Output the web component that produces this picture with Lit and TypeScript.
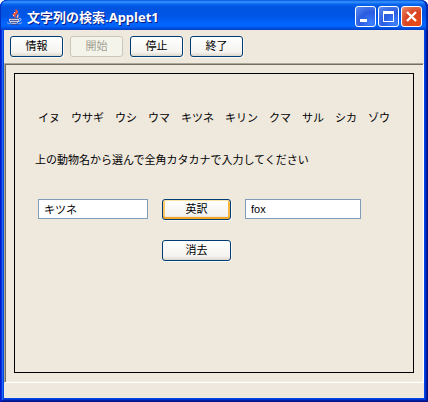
import { LitElement, html, css, svg } from "lit";
import { customElement, state } from "lit/decorators.js";

const ANIMALS: [string, string][] = [
  ["イヌ", "dog"],
  ["ウサギ", "rabbit"],
  ["ウシ", "cow"],
  ["ウマ", "horse"],
  ["キツネ", "fox"],
  ["キリン", "giraffe"],
  ["クマ", "bear"],
  ["サル", "monkey"],
  ["シカ", "deer"],
  ["ゾウ", "elephant"],
];

const javaCup = svg`
  <path d="M7 8C5 6 5 5 7 4C9 3 9 2 8 0C11 1 12 3 10 5C8 6 8 7 9 9Z" fill="#f0583c"/>
  <path d="M10 9C9 7 10 6 12 5C11 7 12 7 11 9Z" fill="#ffb8a0"/>
  <path d="M7 4L8 3M6 6L7 7" stroke="#ffd8cc"/>
  <path d="M2 9H12V11C12 13 10 15 7 15S2 13 2 11Z" fill="#c4cce4"/>
  <path d="M2 9.500H12M3 11.500H11M4 13.500H10" stroke="#5060a0"/>
  <path d="M12 9.500C15 9 15 12 11 12.500" fill="none" stroke="#d4daf0"/>
  <path d="M0 13.500C3 16 12 16 15 13.500" fill="none" stroke="#a8b4dc"/>
  <path d="M3 15.500H12" stroke="#38489c"/>`;

@customElement("app-root")
export class AppRoot extends LitElement {
  @state() private word = "キツネ";
  @state() private answer = "fox";

  static styles = css`
    :host {
      display: block;
      font: 11px/16px "Liberation Sans", "Noto Sans CJK JP", sans-serif;
      color: #000;
      background: #fff;
    }
    * {
      box-sizing: border-box;
    }
    .window {
      display: flex;
      flex-direction: column;
      min-height: 100vh;
      padding: 0 4px 4px;
      border-radius: 7px 7px 0 0;
      background: #0046e4;
      box-shadow: inset 1px 0 #0019cf, inset -1px -1px #00138c,
        inset 2px 0 #0831d9, inset -2px -2px #001ea0, inset 3px 0 #166aee,
        inset -3px -3px #0330d0;
      overflow: hidden;
    }
    .titlebar {
      display: flex;
      align-items: center;
      gap: 4px;
      height: 30px;
      margin: 0 -4px;
      padding: 3px 6px 0 7px;
      border-radius: 7px 7px 0 0;
      background: linear-gradient(
        #0058e0 0,
        #3a93ff 2px,
        #0868f0 4px,
        #0054e0 7px,
        #0055e5 16px,
        #0062fb 22px,
        #0066ff 26px,
        #0050e0 28px,
        #0040c8 30px
      );
      box-shadow: inset 1px 0 #0030c0, inset -2px 0 #0028b0;
    }
    .cup {
      width: 16px;
      height: 16px;
      flex: none;
    }
    .title {
      flex: 1;
      margin: 0;
      font: bold 13px/20px "Noto Sans", "Noto Sans CJK JP", sans-serif;
      color: #fff;
      text-shadow: 1px 1px #0a1883;
      white-space: nowrap;
    }
    .controls {
      display: flex;
      gap: 2px;
    }
    .control {
      width: 21px;
      height: 21px;
      padding: 0;
      border: 1px solid #fff;
      border-radius: 3px;
      background: radial-gradient(circle at 80% 85%, #3c80ff, #2a5ce0 50%, #5c8cf0);
    }
    .control.close {
      background: radial-gradient(circle at 75% 80%, #e84c18, #d84420 50%, #f09070);
    }
    .control svg {
      display: block;
      width: 19px;
      height: 19px;
    }
    .toolbar {
      display: flex;
      gap: 7px;
      padding: 6px;
      background: #eee8dd;
    }
    .button {
      height: 21px;
      padding: 0;
      border: 1px solid #003c74;
      border-radius: 3px;
      background: linear-gradient(#fff, #f4f3ef 80%, #dcd7cc);
      box-shadow: 1px 1px #faf8f3;
      font: inherit;
      line-height: 19px;
      color: #000;
    }
    .toolbar .button {
      width: 53px;
    }
    .button:disabled {
      border-color: #c9c7ba;
      background: #f5f4ea;
      color: #a1a192;
      box-shadow: none;
    }
    .button.primary {
      box-shadow: inset 0 1px #ffe4a8, inset 0 -2px #f5a623,
        inset 2px 0 #fcc867, inset -2px 0 #f9b640, 1px 1px #faf8f3;
    }
    .applet {
      flex: 1;
      display: flex;
      padding: 9px;
      background: #eee8dd;
      border: 1px solid;
      border-color: #aca899 #fff #fff #aca899;
      box-shadow: inset 1px 1px #716f64, inset -1px -1px #f1efe2;
    }
    .canvas {
      flex: 1;
      border: 1px solid #000;
      padding: 36px 20px 20px;
    }
    .animals {
      display: flex;
      flex-wrap: wrap;
      gap: 0 11px;
      margin: 0;
      padding: 0 0 0 3px;
      list-style: none;
    }
    .hint {
      margin: 26px 0 31px;
      display: block;
    }
    .form {
      display: grid;
      grid-template-columns: 110px 69px 116px;
      gap: 20px 14px;
      padding-left: 3px;
    }
    .clear {
      grid-column: 2;
    }
    .field {
      width: 100%;
      height: 20px;
      padding: 0 5px;
      border: 1px solid #7f9db9;
      border-radius: 0;
      background: #fff;
      font: inherit;
      color: #000;
      outline: none;
    }
    .status {
      height: 15px;
      background: #efe8de;
    }
  `;

  private translate() {
    this.answer = ANIMALS.find(([name]) => name === this.word)?.[1] ?? "";
  }

  private clear() {
    this.word = "";
    this.answer = "";
  }

  render() {
    return html`
      <div class="window">
        <header class="titlebar">
          <svg class="cup" viewBox="0 0 16 16" aria-hidden="true">${javaCup}</svg>
          <h1 class="title">文字列の検索.Applet1</h1>
          <div class="controls">
            <button class="control" aria-label="最小化">
              <svg viewBox="0 0 19 19"><path d="M4 12H11V15H4Z" fill="#fff" /></svg>
            </button>
            <button class="control" aria-label="最大化">
              <svg viewBox="0 0 19 19">
                <path d="M4 4H15V15H4ZM5 7V14H14V7Z" fill="#fff" fill-rule="evenodd" />
              </svg>
            </button>
            <button class="control close" aria-label="閉じる">
              <svg viewBox="0 0 19 19">
                <path d="M5 5L14 14M14 5L5 14" stroke="#fff" stroke-width="2.400" />
              </svg>
            </button>
          </div>
        </header>
        <nav class="toolbar">
          <button class="button">情報</button>
          <button class="button" disabled>開始</button>
          <button class="button">停止</button>
          <button class="button">終了</button>
        </nav>
        <main class="applet">
          <section class="canvas">
            <ul class="animals">
              ${ANIMALS.map(([name]) => html`<li>${name}</li>`)}
            </ul>
            <label class="hint" for="word">上の動物名から選んで全角カタカナで入力してください</label>
            <div class="form">
              <input
                class="field"
                id="word"
                .value=${this.word}
                @input=${(e: Event) => (this.word = (e.target as HTMLInputElement).value)}
              />
              <button class="button primary" @click=${this.translate}>英訳</button>
              <input class="field" aria-label="英訳" readonly .value=${this.answer} />
              <button class="button clear" @click=${this.clear}>消去</button>
            </div>
          </section>
        </main>
        <footer class="status"></footer>
      </div>
    `;
  }
}
